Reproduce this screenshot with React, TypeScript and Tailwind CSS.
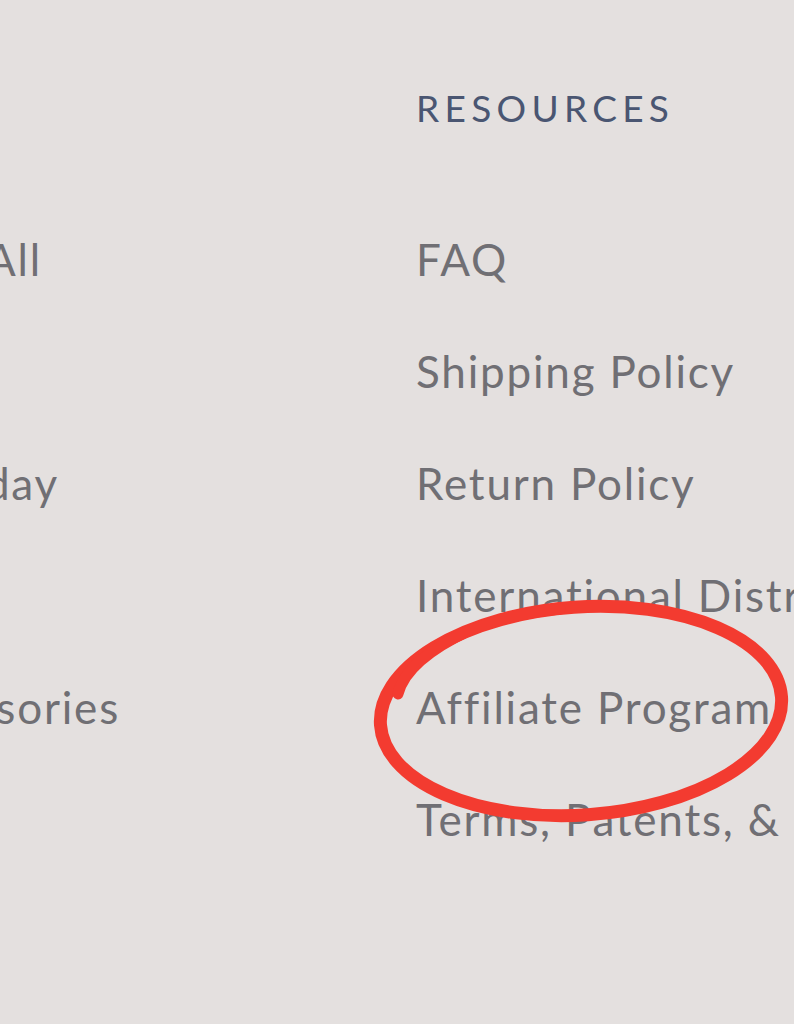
import React from 'react'

const leftLinks = [
  { label: 'Shop All', end: 'w-[42px]' },
  { label: '', end: 'w-[42px]' },
  { label: 'Holiday', end: 'w-[59px]' },
  { label: '', end: 'w-[42px]' },
  { label: 'Accessories', end: 'w-[120px]' }
]

const resources = [
  'FAQ',
  'Shipping Policy',
  'Return Policy',
  'International Distributors',
  'Affiliate Program',
  'Terms, Patents, & Privacy'
]

export default function App() {
  return (
    <div className="relative w-[794px] h-[1024px] overflow-hidden bg-[#e4e0df] font-['Lato','Liberation_Sans',sans-serif]">
      <div className="flex pt-[52px]">
        {/* cut-off shop column */}
        <div className="w-[416px] shrink-0">
          <div className="h-[112px]" />
          <div className="mt-[39px] flex flex-col">
            {leftLinks.map((item, i) => (
              <div key={i} className="h-[112px] flex items-center">
                <div className={`flex justify-end ${item.end}`}>
                  <span className="whitespace-nowrap text-[44px] tracking-[1.8px] text-[#706f74]">
                    {item.label}
                  </span>
                </div>
              </div>
            ))}
          </div>
        </div>

        {/* resources column */}
        <div className="flex flex-col">
          <div className="h-[112px] flex items-center">
            <h3 className="text-[37px] tracking-[5.3px] text-[#4a5672] whitespace-nowrap">RESOURCES</h3>
          </div>
          <ul className="mt-[39px] flex flex-col">
            {resources.map((r) => (
              <li key={r} className="h-[112px] flex items-center">
                <span className="whitespace-nowrap text-[44px] tracking-[1.8px] text-[#706f74]">{r}</span>
              </li>
            ))}
          </ul>
        </div>
      </div>

      {/* hand-drawn marker circle */}
      <svg className="absolute inset-0 pointer-events-none" width="794" height="1024" viewBox="0 0 794 1024">
        <ellipse
          cx="581"
          cy="711"
          rx="201"
          ry="104"
          transform="rotate(-4 581 711)"
          fill="none"
          stroke="#f33b30"
          strokeWidth="13"
        />
        <path
          d="M 398 694 C 404 670, 428 650, 470 630 C 500 618, 530 612, 560 609"
          fill="none"
          stroke="#f33b30"
          strokeWidth="11"
          strokeLinecap="round"
        />
      </svg>
    </div>
  )
}
